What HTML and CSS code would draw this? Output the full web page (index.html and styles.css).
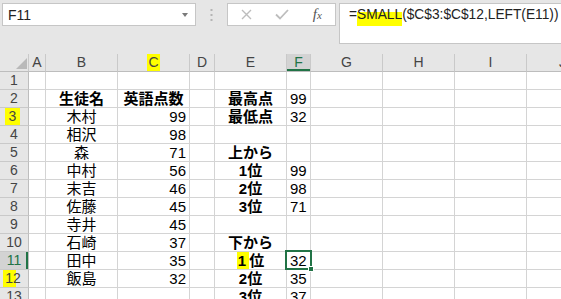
FILE: index.html
```html
<!DOCTYPE html>
<html lang="ja">
<head>
<meta charset="UTF-8" />
<title>英語点数</title>
<link rel="stylesheet" href="styles.css">
</head>
<body>
  <!-- Barre de formule -->
  <div class="topbar">
    <div class="namebox">
      <span>F11</span>
      <span class="arrow"></span>
    </div>
    <svg class="grip" width="3" height="12" viewBox="0 0 3 12">
      <rect x="0.5" y="0" width="2" height="2" fill="#b4b4b4"/>
      <rect x="0.5" y="5" width="2" height="2" fill="#b4b4b4"/>
      <rect x="0.5" y="10" width="2" height="2" fill="#b4b4b4"/>
    </svg>
    <div class="fbtns">
      <span class="btn">
        <svg width="11" height="11" viewBox="0 0 11 11">
          <path d="M1 1 L10 10 M10 1 L1 10" stroke="#bdbdbd" stroke-width="1.4" fill="none"/>
        </svg>
      </span>
      <span class="btn">
        <svg width="14" height="11" viewBox="0 0 14 11">
          <path d="M1 5.5 L5 9.5 L13 1" stroke="#bdbdbd" stroke-width="1.8" fill="none"/>
        </svg>
      </span>
      <span class="btn fx">f<small>x</small></span>
    </div>
    <div class="formula">=<span class="mark">SMALL</span>($C$3:$C$12,LEFT(E11))</div>
  </div>

  <!-- Feuille -->
  <table class="sheet">
    <colgroup>
      <col style="width:29px"><col style="width:17px"><col style="width:72px"><col style="width:72px">
      <col style="width:25px"><col style="width:72px"><col style="width:24px"><col style="width:72px">
      <col style="width:72px"><col style="width:72px"><col style="width:72px">
    </colgroup>
    <tr class="colhead">
      <th class="corner"><svg width="11" height="11" viewBox="0 0 11 11"><path d="M11 0 L11 11 L0 11 Z" fill="#b9b9b9"/></svg></th>
      <th>A</th><th>B</th><th><span class="hl-c">C</span></th><th>D</th><th>E</th>
      <th class="sel-col">F</th><th>G</th><th>H</th><th>I</th><th>J</th>
    </tr>
    <tr><th class="rh">1</th><td></td><td></td><td></td><td></td><td></td><td></td><td></td><td></td><td></td><td></td></tr>
    <tr><th class="rh">2</th><td></td><td class="lbl">生徒名</td><td class="lbl">英語点数</td><td></td><td class="lbl">最高点</td><td class="res">99</td><td></td><td></td><td></td><td></td></tr>
    <tr><th class="rh"><span class="hl-r3">3</span></th><td></td><td class="name">木村</td><td class="num">99</td><td></td><td class="lbl">最低点</td><td class="res">32</td><td></td><td></td><td></td><td></td></tr>
    <tr><th class="rh">4</th><td></td><td class="name">相沢</td><td class="num">98</td><td></td><td></td><td></td><td></td><td></td><td></td><td></td></tr>
    <tr><th class="rh">5</th><td></td><td class="name">森</td><td class="num">71</td><td></td><td class="lbl">上から</td><td></td><td></td><td></td><td></td><td></td></tr>
    <tr><th class="rh">6</th><td></td><td class="name">中村</td><td class="num">56</td><td></td><td class="lbl">1位</td><td class="res">99</td><td></td><td></td><td></td><td></td></tr>
    <tr><th class="rh">7</th><td></td><td class="name">末吉</td><td class="num">46</td><td></td><td class="lbl">2位</td><td class="res">98</td><td></td><td></td><td></td><td></td></tr>
    <tr><th class="rh">8</th><td></td><td class="name">佐藤</td><td class="num">45</td><td></td><td class="lbl">3位</td><td class="res">71</td><td></td><td></td><td></td><td></td></tr>
    <tr><th class="rh">9</th><td></td><td class="name">寺井</td><td class="num">45</td><td></td><td></td><td></td><td></td><td></td><td></td><td></td></tr>
    <tr><th class="rh">10</th><td></td><td class="name">石崎</td><td class="num">37</td><td></td><td class="lbl">下から</td><td></td><td></td><td></td><td></td><td></td></tr>
    <tr><th class="rh sel-row">11</th><td></td><td class="name">田中</td><td class="num">35</td><td></td><td class="lbl"><span class="hl-1">1</span>位</td><td class="res active">32</td><td></td><td></td><td></td><td></td></tr>
    <tr><th class="rh"><span class="hl-r12">12</span></th><td></td><td class="name">飯島</td><td class="num">32</td><td></td><td class="lbl">2位</td><td class="res">35</td><td></td><td></td><td></td><td></td></tr>
    <tr><th class="rh">13</th><td></td><td></td><td></td><td></td><td class="lbl">3位</td><td class="res">37</td><td></td><td></td><td></td><td></td></tr>
  </table>
</body>
</html>
```

FILE: styles.css
```css
/* ========== Global ========== */
html, body {
  margin: 0;
  height: 100%;
  overflow: hidden;
  background: #fff;
  font-family: "Liberation Sans", "Noto Sans CJK JP", sans-serif;
}

/* ========== Barre du haut ========== */
.topbar {
  height: 54px;
  box-sizing: border-box;
  padding: 3px 0 0 2px;
  background: #e6e6e6;
  display: flex;
  align-items: flex-start;
}
.namebox {
  width: 194px;
  height: 23px;
  box-sizing: border-box;
  border: 1px solid #c6c6c6;
  background: #fff;
  padding: 0 7px 0 5px;
  display: flex;
  align-items: center;
  justify-content: space-between;
  font-size: 14px;
  color: #222;
}
.arrow {
  width: 0;
  height: 0;
  border-left: 3.5px solid transparent;
  border-right: 3.5px solid transparent;
  border-top: 4px solid #7a7a7a;
}
.grip {
  margin: 6px 0 0 14px;
}
.fbtns {
  margin-left: 14px;
  width: 109px;
  height: 23px;
  box-sizing: border-box;
  border: 1px solid #c6c6c6;
  background: #fff;
  padding-left: 1px;
  display: flex;
}
.btn {
  width: 36px;
  display: flex;
  align-items: center;
  justify-content: center;
}
.fx {
  font-family: "Liberation Serif", serif;
  font-style: italic;
  font-size: 15px;
  color: #555;
}
.fx small {
  font-size: 11px;
}
.formula {
  margin-left: 3px;
  flex: 1;
  height: 41px;
  box-sizing: border-box;
  border: 1px solid #c6c6c6;
  border-right: none;
  background: #fff;
  padding: 1px 0 0 9px;
  font-size: 13.75px;
  line-height: 20px;
  color: #222;
  white-space: nowrap;
  overflow: hidden;
}
.mark {
  background: linear-gradient(transparent 25%, #ffff00 25%);
  padding-bottom: 4px;
}

/* ========== Feuille ========== */
.sheet {
  border-collapse: separate;
  border-spacing: 0;
  table-layout: fixed;
  width: 599px;
  font-size: 15px;
}
.sheet th, .sheet td {
  height: 17px;
  padding: 0 3px;
  line-height: 15px;
  border-right: 1px solid #d4d4d4;
  border-bottom: 1px solid #d4d4d4;
  overflow: hidden;
  white-space: nowrap;
  vertical-align: middle;
  color: #000;
}
.colhead th {
  background: #e6e6e6;
  color: #444;
  font-size: 14px;
  font-weight: normal;
  text-align: center;
  border-right-color: #c9c9c9;
  border-bottom-color: #bdbdbd;
}
.colhead th.corner {
  padding: 0;
  vertical-align: top;
}
.corner svg {
  display: block;
  margin: 4px 0 0 16px;
}
.colhead th.sel-col {
  background: #d3d3d3;
  color: #217346;
  box-shadow: inset 0 -2px #217346;
}
.sheet th.rh {
  padding: 0;
  background: #e6e6e6;
  color: #444;
  font-size: 14px;
  font-weight: normal;
  text-align: center;
  border-right-color: #bdbdbd;
  border-bottom-color: #c9c9c9;
}
.sheet th.sel-row {
  background: #d3d3d3;
  color: #217346;
  box-shadow: inset -2px 0 #217346;
}

/* Cellules */
.name {
  text-align: center;
}
.sheet td.num {
  text-align: right;
  padding-right: 3px;
}
.lbl {
  text-align: center;
  font-weight: bold;
}
.sheet td.res {
  text-align: left;
  padding-left: 3px;
}

/* Cellule active F11 */
.sheet td.active {
  position: relative;
  overflow: visible;
}
.active::before {
  content: "";
  position: absolute;
  left: -2px;
  top: -2px;
  right: -2px;
  bottom: -1px;
  border: 2px solid #217346;
}
.active::after {
  content: "";
  position: absolute;
  right: -4px;
  bottom: -3px;
  width: 4px;
  height: 4px;
  background: #217346;
  border: 1px solid #fff;
}

/* Surlignage jaune */
.hl-c {
  background: #ffff00;
  padding: 2px 1px;
}
.hl-r3 {
  background: #ffff00;
  padding: 1px 4px;
  margin-right: 3px;
}
.hl-r12 {
  background: linear-gradient(90deg, #ffff00 13px, transparent 13px);
  padding: 2px 0 1px 2px;
  margin-left: -4px;
}
.hl-1 {
  background: #ffff00;
  padding: 2px 3px 1px 1px;
}
```
